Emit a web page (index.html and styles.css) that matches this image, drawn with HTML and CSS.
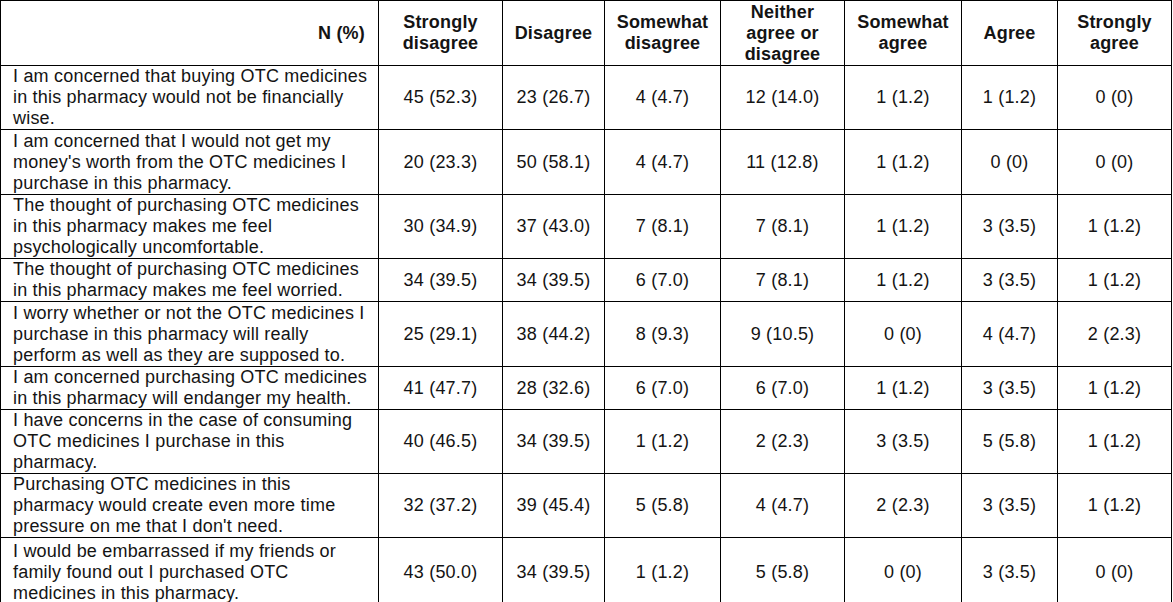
FILE: index.html
```html
<!DOCTYPE html>
<html>
<head>
<meta charset="utf-8">
<link rel="stylesheet" href="styles.css">
</head>
<body>
<table class="survey">
<colgroup>
<col class="c-item"><col class="c-sd"><col class="c-d"><col class="c-swd"><col class="c-n"><col class="c-swa"><col class="c-a"><col class="c-sa">
</colgroup>
<thead>
<tr>
<th class="label">N (%)</th>
<th>Strongly<br>disagree</th>
<th>Disagree</th>
<th>Somewhat<br>disagree</th>
<th>Neither<br>agree or<br>disagree</th>
<th>Somewhat<br>agree</th>
<th>Agree</th>
<th>Strongly<br>agree</th>
</tr>
</thead>
<tbody>
<tr class="r3"><td class="item">I am concerned that buying OTC medicines<br>in this pharmacy would not be financially<br>wise.</td><td>45 (52.3)</td><td>23 (26.7)</td><td>4 (4.7)</td><td>12 (14.0)</td><td>1 (1.2)</td><td>1 (1.2)</td><td>0 (0)</td></tr>
<tr class="r3 tall"><td class="item">I am concerned that I would not get my<br>money's worth from the OTC medicines I<br>purchase in this pharmacy.</td><td>20 (23.3)</td><td>50 (58.1)</td><td>4 (4.7)</td><td>11 (12.8)</td><td>1 (1.2)</td><td>0 (0)</td><td>0 (0)</td></tr>
<tr class="r3"><td class="item">The thought of purchasing OTC medicines<br>in this pharmacy makes me feel<br>psychologically uncomfortable.</td><td>30 (34.9)</td><td>37 (43.0)</td><td>7 (8.1)</td><td>7 (8.1)</td><td>1 (1.2)</td><td>3 (3.5)</td><td>1 (1.2)</td></tr>
<tr class="r2"><td class="item">The thought of purchasing OTC medicines<br>in this pharmacy makes me feel worried.</td><td>34 (39.5)</td><td>34 (39.5)</td><td>6 (7.0)</td><td>7 (8.1)</td><td>1 (1.2)</td><td>3 (3.5)</td><td>1 (1.2)</td></tr>
<tr class="r3 tall"><td class="item">I worry whether or not the OTC medicines I<br>purchase in this pharmacy will really<br>perform as well as they are supposed to.</td><td>25 (29.1)</td><td>38 (44.2)</td><td>8 (9.3)</td><td>9 (10.5)</td><td>0 (0)</td><td>4 (4.7)</td><td>2 (2.3)</td></tr>
<tr class="r2"><td class="item">I am concerned purchasing OTC medicines<br>in this pharmacy will endanger my health.</td><td>41 (47.7)</td><td>28 (32.6)</td><td>6 (7.0)</td><td>6 (7.0)</td><td>1 (1.2)</td><td>3 (3.5)</td><td>1 (1.2)</td></tr>
<tr class="r3"><td class="item">I have concerns in the case of consuming<br>OTC medicines I purchase in this<br>pharmacy.</td><td>40 (46.5)</td><td>34 (39.5)</td><td>1 (1.2)</td><td>2 (2.3)</td><td>3 (3.5)</td><td>5 (5.8)</td><td>1 (1.2)</td></tr>
<tr class="r3"><td class="item">Purchasing OTC medicines in this<br>pharmacy would create even more time<br>pressure on me that I don't need.</td><td>32 (37.2)</td><td>39 (45.4)</td><td>5 (5.8)</td><td>4 (4.7)</td><td>2 (2.3)</td><td>3 (3.5)</td><td>1 (1.2)</td></tr>
<tr class="r3 last"><td class="item">I would be embarrassed if my friends or<br>family found out I purchased OTC<br>medicines in this pharmacy.</td><td>43 (50.0)</td><td>34 (39.5)</td><td>1 (1.2)</td><td>5 (5.8)</td><td>0 (0)</td><td>3 (3.5)</td><td>0 (0)</td></tr>
</tbody>
</table>
</body>
</html>
```

FILE: styles.css
```css
html, body {
  margin: 0;
  padding: 0;
  background: #ffffff;
}

.survey {
  table-layout: fixed;
  border-collapse: separate;
  border-spacing: 0;
  width: 1172px;
  border-left: 1px solid #000;
  border-top: 1px solid #000;
  font-family: "Liberation Sans", Arial, sans-serif;
  font-size: 18px;
  letter-spacing: 0.2px;
  line-height: 21px;
  color: #141414;
}

.c-item { width: 378px; }
.c-sd { width: 124px; }
.c-d { width: 102px; }
.c-swd { width: 116px; }
.c-n { width: 124px; }
.c-swa { width: 117px; }
.c-a { width: 96px; }
.c-sa { width: 114px; }

.survey th,
.survey td {
  box-sizing: border-box;
  border-right: 1px solid #000;
  border-bottom: 1px solid #000;
  padding: 0;
  text-align: center;
  vertical-align: middle;
  white-space: nowrap;
}

.survey th {
  font-weight: bold;
  height: 65px;
}

.survey th.label {
  text-align: right;
  padding-right: 13px;
}

.survey td.item {
  text-align: left;
  padding-left: 12px;
  padding-right: 4px;
  overflow: hidden;
}

.r3 td { height: 64px; }
.r3.tall td { height: 65px; }
.r3.last td { height: 69px; }
.r2 td { height: 43px; }
```
